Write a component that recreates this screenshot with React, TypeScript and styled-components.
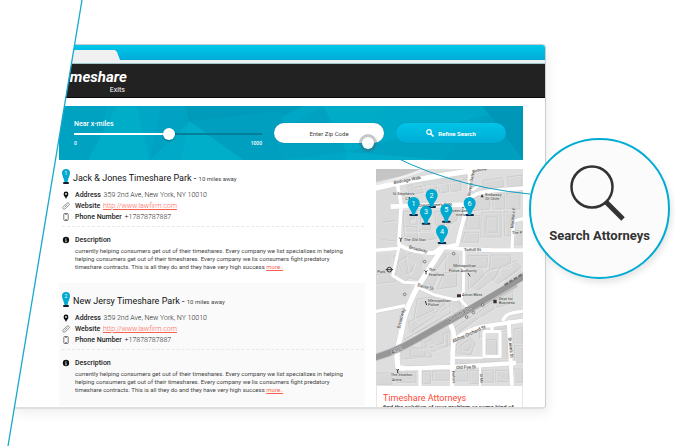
import React, { useState } from "react";
import styled, { createGlobalStyle } from "styled-components";

const Global = createGlobalStyle`
  * { box-sizing: border-box; }
  body { margin: 0; background: #fff; font-family: Roboto, "Liberation Sans", sans-serif; color: #333; }
  button, input { font-family: inherit; margin: 0; }
`;

const Scene = styled.div`
  position: relative;
  height: 100vh;
  overflow: hidden;
`;

const Slice = styled.div`
  height: 100%;
  padding: 44px 129px 37px 12px;
  clip-path: polygon(82px 0, 100% 0, 100% 100%, 8px 100%);
`;

const Frame = styled.div`
  display: flex;
  flex-direction: column;
  height: 100%;
  overflow: hidden;
  background: #fff;
  border: 1px solid #c9cdce;
  border-bottom: 2px solid #dfdfdf;
  border-radius: 4px;
  box-shadow: 2px 4px 12px rgba(0, 0, 0, 0.07);
`;

const TabBar = styled.div`
  flex: none;
  display: flex;
  align-items: flex-end;
  height: 15px;
  background: linear-gradient(#00c8ec, #00abd6);
`;

const BrowserTab = styled.div`
  width: 107px;
  height: 10px;
  background: #f0f0f0;
  clip-path: polygon(0 0, 102px 0, 104px 2px, 100% 100%, 0 100%);
`;

const Toolbar = styled.div`
  flex: none;
  height: 4px;
  background: #eef1f2;
  border-bottom: 1px solid #9fc9cf;
`;

const Header = styled.header`
  flex: none;
  height: 34px;
  background: #222;
  border-bottom: 1px solid #080808;
  display: flex;
  padding: 4px 0 0 44px;
`;

const Logo = styled.a`
  display: flex;
  flex-direction: column;
  align-items: flex-end;
  color: #fff;
  text-decoration: none;
`;

const LogoName = styled.span`
  font-size: 15px;
  line-height: 18px;
  font-weight: 700;
  font-style: italic;
`;

const LogoSub = styled.span`
  font-size: 7px;
  line-height: 8px;
  padding-right: 2px;
`;

const Page = styled.main`
  padding: 8px 22px 0 46px;
`;

const Banner = styled.form`
  position: relative;
  height: 54px;
  display: flex;
  align-items: center;
  gap: 12px;
  padding: 0 17px 0 15px;
  background: #00a6c5;
`;

const Facets = styled.svg`
  position: absolute;
  inset: 0;
  width: 100%;
  height: 100%;
`;

const RangeField = styled.div`
  position: relative;
  flex: 1;
  display: flex;
  flex-direction: column;
  color: #fff;
`;

const RangeLabel = styled.label`
  font-size: 7px;
  font-weight: 500;
  line-height: 8px;
`;

const RangeInput = styled.input`
  appearance: none;
  width: 100%;
  height: 12px;
  background:
    linear-gradient(#fff, #fff) left center / 51% 2px no-repeat,
    linear-gradient(#057f98, #057f98) right center / 49% 2px no-repeat;
  &::-webkit-slider-thumb {
    appearance: none;
    width: 12px;
    height: 12px;
    border-radius: 50%;
    background: #fff;
    box-shadow: 0 1px 2px rgba(0, 60, 80, 0.5);
  }
`;

const RangeEnds = styled.div`
  display: flex;
  justify-content: space-between;
  font-size: 5px;
  font-weight: 500;
  line-height: 6px;
`;

const ZipField = styled.div`
  position: relative;
  width: 110px;
`;

const ZipInput = styled.input`
  display: block;
  width: 100%;
  height: 20px;
  padding: 0;
  border: 0;
  border-radius: 10px;
  background: #fff;
  box-shadow: 0 0 1px #04738a;
  text-align: center;
  font-size: 6px;
  color: #444;
  &::placeholder { color: #444; opacity: 1; }
`;

const TouchDot = styled.span`
  position: absolute;
  right: 7px;
  bottom: -9px;
  width: 18px;
  height: 18px;
  border-radius: 50%;
  border: 3px solid rgba(80, 95, 100, 0.35);
  background: #fff;
  background-clip: padding-box;
`;

const RefineButton = styled.button`
  position: relative;
  width: 110px;
  height: 20px;
  display: flex;
  align-items: center;
  justify-content: center;
  gap: 4px;
  padding: 0;
  border: 0;
  border-radius: 10px;
  color: #fff;
  font-size: 6px;
  font-weight: 700;
  background: linear-gradient(#00c4e8, #00acd5);
  box-shadow: 0 0 1px #04738a;
`;

const Columns = styled.div`
  display: flex;
  gap: 11px;
`;

const Listings = styled.div`
  flex: 1;
  min-width: 0;
`;

const Listing = styled.article<{ $shaded: boolean }>`
  padding: 12px 1px 12px 3px;
  background: ${(p) => (p.$shaded ? "#fafafa" : "transparent")};
`;

const TitleRow = styled.div`
  display: flex;
  align-items: center;
  gap: 3px;
  height: 12px;
  margin-bottom: 5px;
`;

const SmallPin = styled.svg`
  width: 8px;
  height: 16px;
  flex: none;
  margin-bottom: 3px;
`;

const Title = styled.h2`
  margin: 0;
  font-size: 9px;
  font-weight: 400;
  line-height: 14px;
  color: #111;
`;

const Distance = styled.span`
  font-size: 6px;
  color: #444;
`;

const Detail = styled.div`
  display: flex;
  align-items: center;
  gap: 5px;
  height: 11px;
  font-size: 7px;
  font-weight: 300;
  color: #222;
  svg { width: 8px; height: 8px; flex: none; }
`;

const Term = styled.span`
  font-weight: 500;
  color: #222;
  margin-right: 1px;
`;

const RedLink = styled.a`
  color: #f9604f;
`;

const Rule = styled.hr`
  margin: 4px 0 7px;
  border: 0;
  border-top: 1px dashed #e8e8e8;
`;

const Blurb = styled.p`
  margin: 2px 12px 0 13px;
  font-size: 6px;
  line-height: 8px;
  color: #444;
  white-space: pre-line;
`;

const Side = styled.aside`
  width: 147px;
  flex: none;
  margin-top: 9px;
`;

const MapArt = styled.svg`
  display: block;
  width: 100%;
  height: auto;
`;

const Promo = styled.div`
  padding: 7px 6px;
  border: 1px solid #e6e6e6;
  border-top: 0;
`;

const PromoTitle = styled.h3`
  margin: 0;
  font-size: 9px;
  line-height: 10px;
  font-weight: 400;
  color: #fb4a38;
`;

const PromoText = styled.p`
  margin: 0;
  font-size: 6px;
  line-height: 8px;
  font-weight: 500;
  white-space: nowrap;
`;

const SliceLine = styled.svg`
  position: absolute;
  inset: 0;
  width: 100%;
  height: 100%;
  pointer-events: none;
`;

const Connector = styled.svg`
  position: absolute;
  top: 140px;
  right: 143px;
  width: 160px;
  height: 60px;
  pointer-events: none;
`;

const Callout = styled.button`
  position: absolute;
  top: 138px;
  right: 5px;
  width: 141px;
  height: 141px;
  display: flex;
  flex-direction: column;
  align-items: center;
  gap: 7px;
  padding: 25px 0 0;
  border: 2px solid #00acd3;
  border-radius: 50%;
  background: #fbfbfb;
  box-shadow: 2px 4px 6px rgba(0, 0, 0, 0.1);
  color: #333;
  font-size: 13px;
  line-height: 16px;
  font-weight: 700;
  svg { width: 60px; height: 56px; }
`;

const PinIcon = ({ n }: { n: number }) => (
  <SmallPin viewBox="0 0 8 16">
    <rect x="1" y="13" width="6" height="2" rx="1" fill="#111c2c" />
    <path d="M4 0a4 4 0 0 1 4 4c0 3-2 5-2.500 9H2.500C2 9 0 7 0 4a4 4 0 0 1 4-4z" fill="#00a9d0" />
    <text x="4" y="6" fontSize="5" fill="#fff" textAnchor="middle">{n}</text>
  </SmallPin>
);

const PlaceIcon = () => (
  <svg viewBox="0 0 8 8"><path fillRule="evenodd" d="M4 .5a2.400 2.400 0 0 1 2.400 2.400C6.400 5 4.500 6 4 8 3.500 6 1.600 5 1.600 2.900A2.400 2.400 0 0 1 4 .5zM4 2a.9.900 0 1 0 0 1.800A.9.900 0 0 0 4 2z" fill="#111" /></svg>
);
const ClipIcon = () => (
  <svg viewBox="0 0 8 8"><g transform="rotate(-42 4 4)" fill="none" stroke="#777" strokeWidth=".7"><rect x="0" y="2.600" width="8" height="2.900" rx="1.450" /><path d="M2 4h4" /></g></svg>
);
const PhoneIcon = () => (
  <svg viewBox="0 0 8 8"><rect x="1.800" y=".5" width="4.400" height="7" rx=".8" fill="none" stroke="#555" strokeWidth=".8" /><path d="M3 6.500h2M3 1.500h2" stroke="#555" strokeWidth=".6" /></svg>
);
const InfoIcon = () => (
  <svg viewBox="0 0 8 8"><circle cx="4" cy="4" r="3.200" fill="#111" /><path d="M4 3.500V6M4 2v.8M3.400 3.600H4M3.400 5.800h1.200" stroke="#fff" strokeWidth=".7" /></svg>
);

const listings = ["Jack & Jones Timeshare Park", "New Jersy Timeshare Park"];

const ListingCard = ({ name, index }: { name: string; index: number }) => (
  <Listing $shaded={index % 2 === 1}>
    <TitleRow>
      <PinIcon n={index + 1} />
      <Title>{name} - <Distance>10 miles away</Distance></Title>
    </TitleRow>
    <Detail><PlaceIcon /><span><Term>Address</Term> 359 2nd Ave, New York, NY 10010</span></Detail>
    <Detail><ClipIcon /><span><Term>Website</Term> <RedLink href="#site">http://www.lawfirm.com</RedLink></span></Detail>
    <Detail><PhoneIcon /><span><Term>Phone Number</Term> +17878787887</span></Detail>
    <Rule />
    <Detail><InfoIcon /><Term>Description</Term></Detail>
    <Blurb>
      {"currently helping consumers get out of their timeshares. Every company we list specializes in helping\nhelping consumers get out of their timeshares. Every company we lis consumers fight predatory\ntimeshare contracts. This is all they do and they have very high success "}
      <RedLink href="#more">more..</RedLink>
    </Blurb>
  </Listing>
);

/* Building outlines; the map is drawn on a 441 x 651 grid. */
const buildings = [
  "M95 52l40-10 8 28-44 8z", "M146 48l34-8 2 32-30 2z", "M186 40l30-6 2 34-26 4z", "M222 32l32-6 2 38-30 4z", "M110 40l150-32 14 10-4 14-160 24z",
  "M82 128l34-2v24h-14v16h30v22H84z", "M122 126l40-4v22h-28v20h30v24h-40z", "M176 128l26-2 4 40-26 4z", "M212 124l30-2 2 30-26 18z", "M84 172l38 2 4 32-40-4z", "M132 180l30 2 20 26-44 8z", "M186 168l40-4-20 36z",
  "M282 92l36-14 24 12v30l-60 6z", "M348 78l38-4v46h-34z", "M392 74l40-4v50h-38z", "M276 140h36v40h-42z", "M318 130h58v74h-62z", "M330 144h34v46h-34z", "M384 128l22 2v70h-20z", "M266 190h42v30h-50z", "M414 184l24 4v40h-20z", "M320 34l60-8 4 26-62 10z", "M394 24l44-6v32l-40 4z",
  "M52 262l22-20 20 14 22-6 26 16-8 28 16 16-30 24-20-8-18 14-24-22 8-20z", "M66 278l24-16 24 18-6 28-24 8z", "M88 260l28 24-18 34z",
  "M176 266l22-22 14 14-34 48-14-6z", "M212 254l36 4-2 38-38 6z", "M154 306l34 4-16 42-40 8z", "M202 312l40-4v44l-58 8z",
  "M276 260h60l-4 34-56 4z", "M344 258h60v36l-64 8z", "M276 308l40-8 12 14-50 46z", "M334 306l28-10 14 14-70 54-16-10z", "M372 296l48-22 16 20-72 52-12-12z",
  "M124 390l44-6 38 10 8 20-90 46-10-12z", "M98 458l110-52 14 14-120 72z", "M114 482l114-76 12 14-130 78z", "M218 386l34 6 4 34-30 10z", "M166 392l44 6-34 36z", "M86 510l110-58 10 12-110 64z",
  "M138 498l60-34 22 18v48l-40 10-8-18-34 14z", "M148 520l20-10 10 18 24-6v-28l12-4v42l-50 18z", "M78 530l50 8 40-4v30l-90 6z", "M104 540h44v22h-44z",
  "M240 528l38-30 20 24-14 36-40-4z", "M254 528l22-14 10 14-10 18-20-4z", "M238 474l60-40 14 10-68 48z", "M304 432l42-30 12 14-46 30z", "M350 400l60-34v36l-52 14z", "M312 480l78-20v18l-50 8-30 20z",
  "M332 512h30v46h-30z", "M244 568h60v16h-60z", "M308 564h84v16h-84z", "M414 480l26-4v46h-26z", "M416 530h24v50h-24z", "M372 488l22-4v84h-22z",
  "M64 610h56v30H64z", "M140 608h24v36h-24z", "M170 606h52v28h-52z", "M236 606h40v30h-40z", "M282 604h30v40h-30z", "M320 604h32v36h-32z", "M358 604h40v34h-40z", "M412 600h28v40h-28z", "M0 612h48v34H0z", "M352 610l44 24M330 614l16 16M70 616l40 18", "M0 318l50-8 10 28-60 6z", "M20 160l40-6M18 212l42 4", "M388 330l40-28 12 14-40 34z"
];

const roads: [string, number][] = [
  ["M-4 58C80 38 200 18 310 2", 16], ["M64 42c4 40 16 50 10 90l-6 96", 11], ["M44 113l110-4 120-2", 14],
  ["M280 4c4 60 0 86-10 120-10 40-18 60-26 102l-50 12", 12], ["M272 100c20-30 40-34 170-42", 12],
  ["M-4 244l70-6", 10], ["M68 226c20 14 60 24 104 26l26-18 64 6 90 4 92 0", 12],
  ["M200 236c-30 50-60 90-84 134-16 34-34 70-40 120-8 40-18 60-10 106l20 2", 16],
  ["M264 240l-2 130", 9], ["M408 244l4-88 34-8", 10], ["M70 230l-20 90 34 20 42 2", 9],
  ["M116 350l60 28 60 14 20-4", 9], ["M-4 428l92-18", 10], ["M262 366l-8 26 22 26", 9],
  ["M218 458c20 30 16 40 12 90l-2 104", 14], ["M230 514c30-20 60-36 94-42l120-18", 12],
  ["M60 596c50 6 90-2 170-2l190-12", 13], ["M398 454l10 196", 12], ["M380 456c10-24 20-22 64-30", 10],
  ["M348 474v14l24 0v74h-48v-74h24", 10], ["M132 596v56", 10], ["M312 586v66", 6], ["M288 64l20-14", 8], ["M230 566h90", 7]
];

const labels: [string, number, number, number, number][] = [
  ["Birdcage Walk", 54, 45, -11, 13], ["St Stephen's", 50, 79, 0, 12], ["Club", 88, 92, 0, 12], ["Queen Anne's Gate", 128, 113, -2, 12],
  ["Embassy", 328, 81, 0, 12], ["Of Chile", 328, 94, 0, 12], ["The Old Star", 84, 215, 0, 12], ["Broadway", 98, 238, 14, 13],
  ["Tothill St", 264, 247, 0, 13], ["The", 158, 307, 0, 12], ["Feathers", 158, 320, 0, 12], ["Metropolitan", 232, 295, 0, 12],
  ["Police Authority", 218, 308, 0, 12], ["Park", 4, 312, 0, 12], ["Birdcage", 290, 12, -14, 12], ["Storey's Gate", 282, 82, -80, 12],
  ["nne's", 240, 140, 0, 12], ["Queen Anne's", 222, 128, 0, 11], ["Matthew P", 412, 178, -84, 13], ["The P", 408, 194, 0, 12],
  ["Dacre St", 124, 352, 14, 13], ["Action Bikes", 258, 382, 0, 11], ["Metropolitan", 156, 398, 0, 12], ["Police", 156, 410, 0, 12],
  ["Dept for", 368, 394, 0, 12], ["Business", 368, 406, 0, 12], ["Broadway", 72, 479, -76, 14], ["Victoria St", 218, 459, -30, 17],
  ["A302", 48, 555, -22, 15], ["Abbey Orchard St", 232, 521, -24, 14], ["Old Pye St", 241, 600, -2, 13], ["St Ann's St", 397, 506, 84, 13],
  ["The Stratton", 44, 622, 0, 12], ["Arms", 48, 635, 0, 12], ["Perkin's", 228, 606, 86, 11], ["St Ma", 312, 614, 86, 11]
];

const pins: [number, number, number][] = [[1, 113, 138], [2, 167, 114], [3, 150, 164], [5, 211, 158], [6, 281, 138], [4, 198, 222]];

const StreetMap = () => (
  <MapArt viewBox="0 0 441 651" role="img" aria-label="Map of attorneys">
    <rect width="441" height="651" fill="#dedede" />
    <path d="M0 0h134c-40 18-60 22-134 38z" fill="#c5c5c5" />
    <path d="M0 48C70 30 90 22 150 0" fill="none" stroke="#efefef" strokeWidth="7" />
    <path d="M0 64l60-12 8 60-6 116-62 8zM0 256l48-6-8 70 36 18 34 2-24 66-86 18z" fill="#dadada" />
    <g fill="#d8d8d8" stroke="#c4c4c4" strokeWidth="2">{buildings.map((d) => <path key={d} d={d} />)}</g>
    <g fill="none" stroke="#ebebeb" strokeWidth="1.500" transform="translate(3 3)">{buildings.map((d) => <path key={d} d={d} />)}</g>
    <g fill="none" strokeLinejoin="round" stroke="#cfcfcf">{roads.map(([d, w]) => <path key={d} d={d} strokeWidth={w + 2} />)}</g>
    <g fill="none" strokeLinejoin="round" stroke="#fff">{roads.map(([d, w]) => <path key={d} d={d} strokeWidth={w} />)}</g>
    <path d="M-4 566c80-22 130-60 234-116L420 344" fill="none" stroke="#bdbdbd" strokeWidth="22" />
    <path d="M-4 566c80-22 130-60 234-116L446 322" fill="none" stroke="#979797" strokeWidth="17" />
    <path d="M386 348l56-34" stroke="#777" strokeWidth="7" strokeDasharray="12 4" />
    <g fill="#333">
      {labels.map(([t, x, y, r, s]) => (
        <text key={t + y} x={x} y={y} fontSize={s} transform={`rotate(${r} ${x} ${y})`} stroke="#e8e8e8" strokeWidth="2" paintOrder="stroke">{t}</text>
      ))}
    </g>
    <g fill="none" stroke="#333" strokeWidth="3">
      <circle cx="40" cy="302" r="7" /><path d="M29 302h22M70 206l4 5 4-5M74 211v7M146 304l4 5 4-5M150 309v7M62 600l3 5 3-5M65 605v7" />
      <path d="M148 396l4 12M100 84l6 22M259 116h4M276 312l6 10" />
    </g>
    <g fill="#333"><path d="M314 85l4-10 5 10zM243 376h12v9h-12zM352 392h10v11h-10z" /></g>
    <g fill="#ddd" stroke="#555" strokeWidth="2"><circle cx="86" cy="376" r="4" /><circle cx="272" cy="444" r="4" /><circle cx="292" cy="430" r="4" /><circle cx="320" cy="408" r="4" /><circle cx="146" cy="278" r="4" /><circle cx="233" cy="254" r="4" /></g>
    {pins.map(([n, x, y]) => (
      <g key={n} transform={`translate(${x} ${y})`}>
        <rect x="-13" y="-3" width="26" height="6" rx="3" fill="#0d2744" />
        <path d="M0-54a18 18 0 0 1 18 18c0 14-12 20-14 36h-8c-2-16-14-22-14-36a18 18 0 0 1 18-18z" fill="#00a9d0" />
        <text y="-28" fontSize="22" fill="#fff" textAnchor="middle">{n}</text>
      </g>
    ))}
  </MapArt>
);

export default function App() {
  const [miles, setMiles] = useState(508);
  return (
    <Scene>
      <Global />
      <Slice>
        <Frame>
          <TabBar><BrowserTab /></TabBar>
          <Toolbar />
          <Header>
            <Logo href="#home"><LogoName>Timeshare</LogoName><LogoSub>Exits</LogoSub></Logo>
          </Header>
          <Page>
            <Banner onSubmit={(e) => e.preventDefault()}>
              <Facets viewBox="0 0 464 54" preserveAspectRatio="none">
                <path d="M0 0h48L36 54H0z" fill="#00a2c2" />
                <path d="M64 0h16L18 54H4z" fill="#00a2c2" opacity=".6" />
                <path d="M58 0h20l13 54H29z" fill="#00adc9" />
                <path d="M78 0h52l-39 54z" fill="#00a6c5" />
                <path d="M130 0l-39 54h48L130 15z" fill="#00a9c7" />
                <path d="M102 0h26l3 15-40 39z" fill="#00a0c0" opacity=".7" />
                <path d="M126 0h118l-20 10-94 5z" fill="#009abb" />
                <path d="M130 15l94-10v49h-40z" fill="#009fc0" />
                <path d="M130 15l54 39h-62z" fill="#00aeca" />
                <path d="M264 0l24 46-64 8-10-24z" fill="#00a1c1" />
                <path d="M264 0h64l-40 46z" fill="#00abc8" />
                <path d="M328 0l102 8-142 38z" fill="#00a9c7" />
                <path d="M288 46l142-38-46 46z" fill="#00a2c2" />
                <path d="M430 8l34 46h-80z" fill="#009fc0" />
                <path d="M430 8L423 0h41v54z" fill="#0096b8" />
                <path d="M288 46l96 8h-98z" fill="#00acca" />
              </Facets>
              <RangeField>
                <RangeLabel htmlFor="miles">Near x-miles</RangeLabel>
                <RangeInput id="miles" type="range" min={0} max={1000} value={miles} onChange={(e) => setMiles(Number(e.target.value))} />
                <RangeEnds><span>0</span><span>1000</span></RangeEnds>
              </RangeField>
              <ZipField>
                <ZipInput aria-label="Zip code" placeholder="Enter Zip Code" />
                <TouchDot />
              </ZipField>
              <RefineButton type="submit">
                <svg width="8" height="8" viewBox="0 0 8 8" fill="none" stroke="#fff" strokeWidth="1.200"><circle cx="3" cy="3" r="2.300" /><path d="M4.700 4.700L7.500 7.500" strokeWidth="1.600" /></svg>
                Refine Search
              </RefineButton>
            </Banner>
            <Columns>
              <Listings>
                {listings.map((name, i) => <ListingCard key={name} name={name} index={i} />)}
              </Listings>
              <Side>
                <StreetMap />
                <Promo>
                  <PromoTitle>Timeshare Attorneys</PromoTitle>
                  <PromoText>find the solution of your problem or some kind of</PromoText>
                </Promo>
              </Side>
            </Columns>
          </Page>
        </Frame>
      </Slice>
      <SliceLine><line x1="82" y1="0" x2="8" y2="100%" stroke="#17a9cd" strokeWidth="1.300" /></SliceLine>
      <Connector viewBox="0 0 160 60">
        <path d="M4 7Q72 46 158 54" fill="none" stroke="#0e9fc0" strokeWidth="1" />
      </Connector>
      <Callout type="button">
        <svg viewBox="0 0 60 56" fill="none" stroke="#333"><circle cx="22" cy="22" r="20.500" strokeWidth="2.500" /><path d="M36 37l17 17" strokeWidth="5" /></svg>
        Search Attorneys
      </Callout>
    </Scene>
  );
}
